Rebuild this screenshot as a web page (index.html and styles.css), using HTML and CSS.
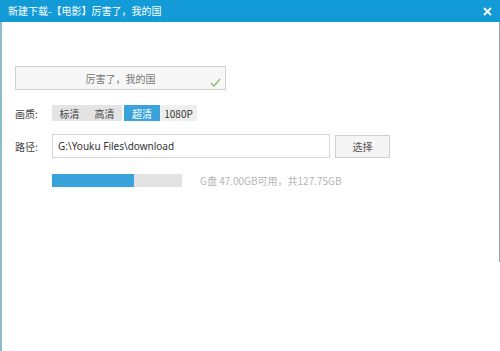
FILE: index.html
```html
<!DOCTYPE html>
<html lang="zh-CN">
<head>
  <meta charset="UTF-8" />
  <title>新建下载</title>
  <link rel="stylesheet" href="styles.css">
</head>
<body>
  <div class="dialog">
    <header class="titlebar">
      <span class="title">新建下载-【电影】厉害了，我的国</span>
      <svg class="close" width="9" height="9" viewBox="0 0 9 9">
        <path d="M1 1 L8 8 M8 1 L1 8" stroke="#fff" stroke-width="1.8" />
      </svg>
    </header>

    <main class="content">
      <div class="name-box">
        <span>厉害了，我的国</span>
        <svg class="check" width="11" height="9" viewBox="0 0 11 9">
          <path d="M1 5 L4 8 L10 1" fill="none" stroke="#7cc36a" stroke-width="1.4" />
        </svg>
      </div>

      <div class="row quality">
        <span class="label">画质:</span>
        <div class="segments">
          <span class="seg">标清</span>
          <span class="seg">高清</span>
          <span class="seg active">超清</span>
          <span class="seg light">1080P</span>
        </div>
      </div>

      <div class="row path">
        <span class="label">路径:</span>
        <div class="path-input">G:\Youku Files\download</div>
        <button type="button" class="choose">选择</button>
      </div>

      <div class="row disk">
        <div class="bar"><div class="fill" style="width: 63%"></div></div>
        <span class="disk-text">G盘 47.00GB可用，共127.75GB</span>
      </div>
    </main>
  </div>
</body>
</html>
```

FILE: styles.css
```css
html, body {
  margin: 0;
  background: #fff;
}

body {
  font-family: "Noto Sans CJK SC", "Noto Sans", sans-serif;
  font-size: 10px;
  color: #333;
}

.dialog {
  width: 500px;
  height: 351px;
  box-sizing: border-box;
  border-left: 2px solid #8fbccb;
  position: relative;
}

.dialog::after {
  content: "";
  position: absolute;
  right: 0;
  top: 22px;
  height: 240px;
  width: 1px;
  background: #9aa8ae;
}

.titlebar {
  height: 22px;
  margin-left: -2px;
  background: #139bd8;
  color: #fff;
  display: flex;
  align-items: center;
  justify-content: space-between;
  padding: 0 8px 0 8px;
}

.title {
  font-size: 10px;
  line-height: 22px;
}

.content {
  padding: 44px 0 0 13px;
}

.name-box {
  width: 209px;
  height: 22px;
  border: 1px solid #d2d2d2;
  background: #f7f7f7;
  display: flex;
  align-items: center;
  justify-content: center;
  position: relative;
  color: #777;
}

.check {
  position: absolute;
  right: 4px;
  bottom: 2px;
}

.row {
  display: flex;
  align-items: center;
}

.label {
  width: 37px;
  color: #444;
}

.quality {
  margin-top: 15px;
  height: 16px;
}

.segments {
  display: flex;
  height: 16px;
}

.seg {
  display: flex;
  align-items: center;
  justify-content: center;
  width: 35px;
  background: #e4e4e4;
  color: #444;
}

.seg.active {
  margin-left: 2px;
  width: 36px;
  background: #3aa3dc;
  color: #fff;
}

.seg.light {
  width: 37px;
  background: #eeeeee;
  color: #333;
}

.path {
  margin-top: 13px;
  height: 24px;
}

.path-input {
  width: 271px;
  height: 22px;
  border: 1px solid #d6d6d6;
  padding-left: 5px;
  display: flex;
  align-items: center;
  font-family: "Noto Sans", sans-serif;
  font-size: 10px;
  color: #333;
}

.choose {
  margin-left: 5px;
  width: 55px;
  height: 23px;
  border: 1px solid #cfcfcf;
  background: #f4f4f4;
  font-family: inherit;
  font-size: 10px;
  color: #555;
  padding: 0;
}

.disk {
  margin-top: 15px;
  padding-left: 37px;
}

.bar {
  width: 130px;
  height: 13px;
  background: #e3e3e3;
}

.fill {
  height: 100%;
  background: #3aa3dc;
}

.disk-text {
  margin-left: 18px;
  color: #b5b5b5;
  font-size: 10px;
}
```
